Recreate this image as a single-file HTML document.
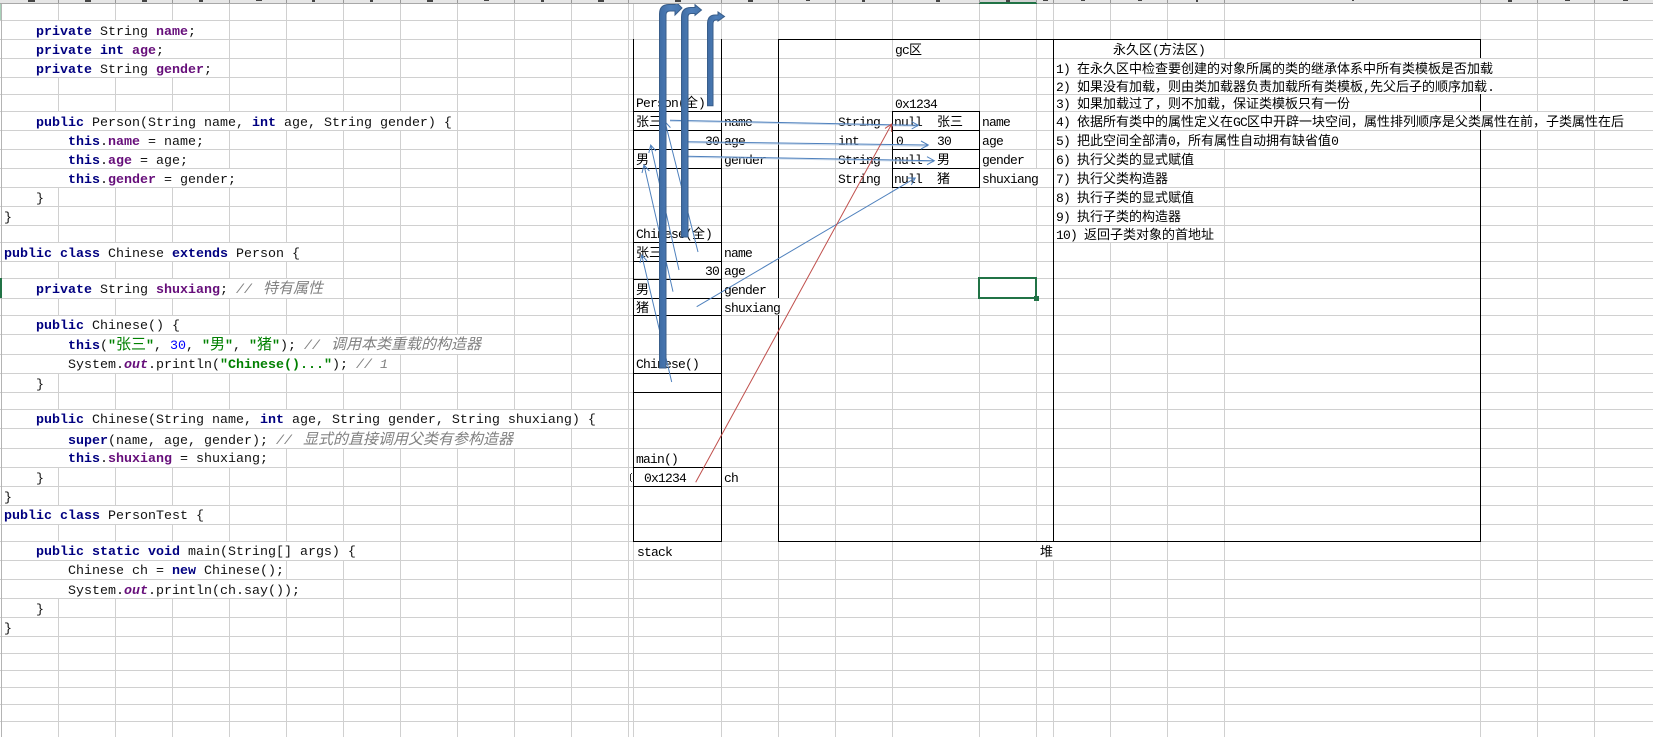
<!DOCTYPE html>
<html><head><meta charset="utf-8"><style>
html,body{margin:0;padding:0;background:#fff}
#p{position:relative;width:1653px;height:737px;overflow:hidden;background:#fff}
svg{position:absolute;left:0;top:0}
.l{position:absolute;white-space:pre;font:13.33px/18px "Liberation Mono",monospace;color:#111;height:18px}
.k{font-weight:bold;color:#000080}
.f{font-weight:bold;color:#660e7a}
.o{font-weight:bold;font-style:italic;color:#660e7a}
.s{font-weight:bold;color:#008000}
.sc{color:#008000;font:15px/0 "Noto Sans CJK SC",sans-serif}
.n{color:#0000ff}
.m{font-style:italic;color:#808080}
.mc{font:italic 15px/0 "Noto Sans CJK SC",sans-serif;color:#808080;margin-left:3px}
.d{position:absolute;white-space:pre;font:13px/18px "Liberation Mono",monospace;letter-spacing:-.8px;color:#000;height:18px}
.d b{font:13px/0 "WenQuanYi Zen Hei","Noto Sans CJK SC",sans-serif;letter-spacing:0}
</style></head><body><div id="p">
<svg width="1653" height="737" shape-rendering="crispEdges">
<path fill="none" stroke="#d0d0d0" stroke-width="1" d="M58.5 3V737M115.5 3V737M172.5 3V737M229.5 3V737M286.5 3V737M343.5 3V737M400.5 3V737M457.5 3V737M514.5 3V737M571.5 3V737M628.5 3V737M633.5 3V737M721.5 3V737M778.5 3V737M835.5 3V737M892.5 3V737M979.5 3V737M1036.5 3V737M1053.5 3V737M1110.5 3V737M1167.5 3V737M1224.5 3V737M1480.5 3V737M1537.5 3V737M1594.5 3V737
M0 20.5H1653M0 39.5H1653M0 58.5H1653M0 77.5H1653M0 94.5H1653M0 111.5H1653M0 130.5H1653M0 149.5H1653M0 168.5H1653M0 187.5H1653M0 206.5H1653M0 225.5H1653M0 242.5H1653M0 261.5H1653M0 278.5H1653M0 298.5H1653M0 315.5H1653M0 334.5H1653M0 354.5H1653M0 373.5H1653M0 392.5H1653M0 409.5H1653M0 428.5H1653M0 448.5H1653M0 467.5H1653M0 486.5H1653M0 505.5H1653M0 524.5H1653M0 541.5H1653M0 560.5H1653M0 579.5H1653M0 598.5H1653M0 617.5H1653M0 636.5H1653M0 653.5H1653M0 670.5H1653M0 687.5H1653M0 704.5H1653M0 721.5H1653"/>
<g fill="#fff">
<rect x="2" y="21" width="171" height="18"/><rect x="2" y="40" width="171" height="18"/><rect x="2" y="59" width="171" height="18"/>
<rect x="2" y="112" width="399" height="18"/><rect x="2" y="131" width="171" height="18"/><rect x="2" y="150" width="171" height="18"/><rect x="2" y="169" width="228" height="18"/>
<rect x="2" y="243" width="285" height="18"/><rect x="2" y="279" width="285" height="19"/><rect x="2" y="316" width="171" height="18"/>
<rect x="2" y="335" width="456" height="19"/><rect x="2" y="355" width="342" height="18"/><rect x="2" y="410" width="570" height="18"/>
<rect x="2" y="429" width="513" height="19"/><rect x="2" y="449" width="228" height="18"/><rect x="2" y="506" width="171" height="18"/>
<rect x="2" y="542" width="342" height="18"/><rect x="2" y="561" width="228" height="18"/><rect x="2" y="580" width="285" height="18"/>
<rect x="1054" y="40" width="114" height="18"/><rect x="1054" y="59" width="427" height="18"/><rect x="1054" y="78" width="427" height="16"/><rect x="1054" y="95" width="171" height="16"/>
<rect x="1054" y="112" width="541" height="18"/><rect x="1054" y="131" width="171" height="18"/><rect x="1054" y="150" width="114" height="18"/><rect x="1054" y="169" width="114" height="18"/><rect x="1054" y="188" width="114" height="18"/><rect x="1054" y="207" width="114" height="18"/><rect x="1054" y="226" width="114" height="16"/>
<rect x="980" y="169" width="57" height="18"/><rect x="722" y="299" width="57" height="16"/><rect x="1030" y="542" width="24" height="18"/>
</g>
<g fill="#000">
<rect x="633" y="39" width="1" height="503"/><rect x="721" y="39" width="1" height="503"/>
<rect x="633" y="111" width="88" height="1"/><rect x="633" y="130" width="88" height="1"/><rect x="633" y="149" width="88" height="1"/><rect x="633" y="168" width="88" height="1"/>
<rect x="633" y="242" width="88" height="1"/><rect x="633" y="261" width="88" height="1"/><rect x="633" y="279" width="88" height="1"/><rect x="633" y="298" width="88" height="1"/><rect x="633" y="315" width="88" height="1"/>
<rect x="633" y="373" width="88" height="1"/><rect x="633" y="392" width="88" height="1"/><rect x="633" y="467" width="88" height="1"/><rect x="633" y="486" width="88" height="1"/><rect x="633" y="541" width="88" height="1"/>
<rect x="778" y="39" width="703" height="1"/><rect x="778" y="541" width="703" height="1"/>
<rect x="778" y="39" width="1" height="259"/><rect x="778" y="315" width="1" height="227"/>
<rect x="1053" y="39" width="1" height="503"/>
<rect x="1480" y="39" width="1" height="19"/><rect x="1480" y="94" width="1" height="17"/><rect x="1480" y="130" width="1" height="412"/>
<rect x="892" y="111" width="88" height="1"/><rect x="892" y="130" width="88" height="1"/><rect x="892" y="149" width="88" height="1"/><rect x="892" y="168" width="88" height="1"/><rect x="892" y="187" width="88" height="1"/>
<rect x="892" y="111" width="1" height="77"/><rect x="979" y="111" width="1" height="77"/>
</g>
<rect x="979" y="278" width="57" height="20" fill="none" stroke="#217346" stroke-width="2"/>
<rect x="1034" y="296" width="5" height="5" fill="#217346"/>
</svg>

<div class="l" style="left:4px;top:24px">    <span class="k">private</span> String <span class="f">name</span>;</div>
<div class="l" style="left:4px;top:43px">    <span class="k">private int</span> <span class="f">age</span>;</div>
<div class="l" style="left:4px;top:62px">    <span class="k">private</span> String <span class="f">gender</span>;</div>
<div class="l" style="left:4px;top:115px">    <span class="k">public</span> Person(String name, <span class="k">int</span> age, String gender) {</div>
<div class="l" style="left:4px;top:134px">        <span class="k">this</span>.<span class="f">name</span> = name;</div>
<div class="l" style="left:4px;top:153px">        <span class="k">this</span>.<span class="f">age</span> = age;</div>
<div class="l" style="left:4px;top:172px">        <span class="k">this</span>.<span class="f">gender</span> = gender;</div>
<div class="l" style="left:4px;top:191px">    }</div>
<div class="l" style="left:4px;top:210px">}</div>
<div class="l" style="left:4px;top:246px"><span class="k">public class</span> Chinese <span class="k">extends</span> Person {</div>
<div class="l" style="left:4px;top:282px">    <span class="k">private</span> String <span class="f">shuxiang</span>; <span class="m">// </span><span class="mc">特有属性</span></div>
<div class="l" style="left:4px;top:318px">    <span class="k">public</span> Chinese() {</div>
<div class="l" style="left:4px;top:338px">        <span class="k">this</span>(<span class="s">"</span><span class="sc">张三</span><span class="s">"</span>, <span class="n">30</span>, <span class="s">"</span><span class="sc">男</span><span class="s">"</span>, <span class="s">"</span><span class="sc">猪</span><span class="s">"</span>); <span class="m">// </span><span class="mc">调用本类重载的构造器</span></div>
<div class="l" style="left:4px;top:357px">        System.<span class="o">out</span>.println(<span class="s">"Chinese()..."</span>); <span class="m">// 1</span></div>
<div class="l" style="left:4px;top:377px">    }</div>
<div class="l" style="left:4px;top:412px">    <span class="k">public</span> Chinese(String name, <span class="k">int</span> age, String gender, String shuxiang) {</div>
<div class="l" style="left:4px;top:433px">        <span class="k">super</span>(name, age, gender); <span class="m">// </span><span class="mc">显式的直接调用父类有参构造器</span></div>
<div class="l" style="left:4px;top:451px">        <span class="k">this</span>.<span class="f">shuxiang</span> = shuxiang;</div>
<div class="l" style="left:4px;top:471px">    }</div>
<div class="l" style="left:4px;top:490px">}</div>
<div class="l" style="left:4px;top:508px"><span class="k">public class</span> PersonTest {</div>
<div class="l" style="left:4px;top:544px">    <span class="k">public static void</span> main(String[] args) {</div>
<div class="l" style="left:4px;top:563px">        Chinese ch = <span class="k">new</span> Chinese();</div>
<div class="l" style="left:4px;top:583px">        System.<span class="o">out</span>.println(ch.say());</div>
<div class="l" style="left:4px;top:602px">    }</div>
<div class="l" style="left:4px;top:621px">}</div>

<div class="d" style="left:636px;top:95px">Person(<b>全</b>)</div>
<div class="d" style="left:636px;top:114px"><b>张三</b></div>
<div class="d" style="left:705px;top:133px">30</div>
<div class="d" style="left:636px;top:152px"><b>男</b></div>
<div class="d" style="left:636px;top:226px">Chinese(<b>全</b>)</div>
<div class="d" style="left:636px;top:245px"><b>张三</b></div>
<div class="d" style="left:705px;top:263px">30</div>
<div class="d" style="left:636px;top:282px"><b>男</b></div>
<div class="d" style="left:636px;top:300px"><b>猪</b></div>
<div class="d" style="left:636px;top:356px">Chinese()</div>
<div class="d" style="left:636px;top:451px">main()</div>
<div class="d" style="left:644px;top:470px">0x1234</div>
<div class="d" style="left:637px;top:544px">stack</div>
<div class="d" style="left:1040px;top:544px"><b>堆</b></div>
<div class="d" style="left:724px;top:114px">name</div>
<div class="d" style="left:724px;top:133px">age</div>
<div class="d" style="left:724px;top:152px">gender</div>
<div class="d" style="left:724px;top:245px">name</div>
<div class="d" style="left:724px;top:263px">age</div>
<div class="d" style="left:724px;top:282px">gender</div>
<div class="d" style="left:724px;top:300px">shuxiang</div>
<div class="d" style="left:724px;top:470px">ch</div>
<div class="d" style="left:895px;top:42px">gc<b>区</b></div>
<div class="d" style="left:895px;top:96px">0x1234</div>
<div class="d" style="left:838px;top:114px">String</div>
<div class="d" style="left:838px;top:133px">int</div>
<div class="d" style="left:838px;top:152px">String</div>
<div class="d" style="left:838px;top:171px">String</div>
<div class="d" style="left:894px;top:114px">null</div>
<div class="d" style="left:896px;top:133px">0</div>
<div class="d" style="left:894px;top:152px">null</div>
<div class="d" style="left:894px;top:171px">null</div>
<div class="d" style="left:937px;top:114px"><b>张三</b></div>
<div class="d" style="left:937px;top:133px">30</div>
<div class="d" style="left:937px;top:152px"><b>男</b></div>
<div class="d" style="left:937px;top:171px"><b>猪</b></div>
<div class="d" style="left:982px;top:114px">name</div>
<div class="d" style="left:982px;top:133px">age</div>
<div class="d" style="left:982px;top:152px">gender</div>
<div class="d" style="left:982px;top:171px">shuxiang</div>
<div class="d" style="left:1113px;top:42px"><b>永久区</b>(<b>方法区</b>)</div>
<div class="d" style="left:1056px;top:61px">1) <b>在永久区中检查要创建的对象所属的类的继承体系中所有类模板是否加载</b></div>
<div class="d" style="left:1056px;top:79px">2) <b>如果没有加载，则由类加载器负责加载所有类模板</b>,<b>先父后子的顺序加载</b>.</div>
<div class="d" style="left:1056px;top:96px">3) <b>如果加载过了，则不加载，保证类模板只有一份</b></div>
<div class="d" style="left:1056px;top:114px">4) <b>依据所有类中的属性定义在</b>GC<b>区中开辟一块空间，属性排列顺序是父类属性在前，子类属性在后</b></div>
<div class="d" style="left:1056px;top:133px">5) <b>把此空间全部清</b>0<b>，所有属性自动拥有缺省值</b>0</div>
<div class="d" style="left:1056px;top:152px">6) <b>执行父类的显式赋值</b></div>
<div class="d" style="left:1056px;top:171px">7) <b>执行父类构造器</b></div>
<div class="d" style="left:1056px;top:190px">8) <b>执行子类的显式赋值</b></div>
<div class="d" style="left:1056px;top:209px">9) <b>执行子类的构造器</b></div>
<div class="d" style="left:1056px;top:227px">10) <b>返回子类对象的首地址</b></div>

<svg width="1653" height="737">
<defs>
<linearGradient id="g" x1="0" y1="0" x2="1" y2="0"><stop offset="0" stop-color="#3f6ca4"/><stop offset=".5" stop-color="#4f7fb9"/><stop offset="1" stop-color="#4373ac"/></linearGradient>
</defs>
<g fill="none" stroke="#b9cde5" stroke-width="1" opacity=".8">
<path d="M670 121.3L918 126.3M686.7 142.7L928 146.3M686.7 157.3L934 161.7"/>
</g>
<g fill="none" stroke="#4f81bd" stroke-width="1">
<path d="M670 120.3L918 125.3M911.7 121.7L918.3 125.3L911.7 129"/>
<path d="M686.7 141.7L928 145M921 141L928.3 145L921 149"/>
<path d="M686.7 156.3L934 160.7M927 156.7L934.3 160.7L927 164.7"/>
<path d="M696.7 306.7L915.3 178M907.3 178L915.3 178L911.3 185"/>
<path d="M698 252L665 121.7M663 129.5L665 121.7L670.4 127.6"/>
<path d="M679 270L650.7 145M648.8 153L650.7 145L656 151"/>
<path d="M673 291.7L644 165M642 173L644 165L649.4 171"/>
<path d="M671.7 382L641.7 255M640 263L641.7 255L647 261"/>
</g>
<path fill="none" stroke="#c0504d" stroke-width="1" d="M695.7 482.3L891.7 124M885 128.4L891.7 124L891.6 132"/>
<g fill="url(#g)" stroke="#385d8a" stroke-width="1">
<path d="M659.5 368V14Q659.5 4.5 669 4.5H675V1L682 8L675 15V11H670Q666 11 666 15V368Z"/>
<path d="M681.5 237V17Q681.5 7.5 691 7.5H695V4.7L701.5 10L695 15.3V13.5H691Q688 13.5 688 17V237Z"/>
<path d="M707.5 105.7V24Q707.5 15 715 15H718V12L724.5 16.5L718 21V20H716Q713 20 713 24V105.7Z"/>
</g>
</svg>

<svg width="1653" height="737" shape-rendering="crispEdges">
<rect x="0" y="0" width="1653" height="3" fill="#e6e6e6"/>
<rect x="0" y="3" width="1653" height="1" fill="#a8a8a8"/>
<rect x="979" y="0" width="57" height="3" fill="#d2d2d2"/>
<rect x="979" y="2" width="58" height="2" fill="#217346"/>
<rect x="1" y="4" width="1" height="733" fill="#b4b4b4"/>
<rect x="0" y="4" width="1" height="16" fill="#a8d0b8"/>
<rect x="0" y="278" width="2" height="20" fill="#217346"/>
<path fill="#444" d="M28 0h7v2h-7zM85 0h6v2h-6zM142 0h5v2h-5zM199 0h4v2h-4zM256 0h6v1h-6zM312 0h3v2h-3zM370 0h3v2h-3zM427 0h6v2h-6zM484 0h5v1h-5zM541 0h3v2h-3zM598 0h6v2h-6zM675 0h6v2h-6zM748 0h5v2h-5zM806 0h4v1h-4zM862 0h3v2h-3zM936 0h4v2h-4zM1006 0h4v2h-4zM1043 0h5v1h-5zM1081 0h4v1h-4zM1138 0h4v1h-4zM1196 0h2v2h-2zM1352 0h2v1h-2zM1508 0h4v2h-4zM1565 0h5v1h-5zM1623 0h5v1h-5z"/>
<path fill="#9a9a9a" d="M58 0h1v3h-1zM115 0h1v3h-1zM172 0h1v3h-1zM229 0h1v3h-1zM286 0h1v3h-1zM343 0h1v3h-1zM400 0h1v3h-1zM457 0h1v3h-1zM514 0h1v3h-1zM571 0h1v3h-1zM628 0h1v3h-1zM721 0h1v3h-1zM778 0h1v3h-1zM835 0h1v3h-1zM892 0h1v3h-1zM979 0h1v3h-1zM1036 0h1v3h-1zM1053 0h1v3h-1zM1110 0h1v3h-1zM1167 0h1v3h-1zM1224 0h1v3h-1zM1480 0h1v3h-1zM1537 0h1v3h-1zM1594 0h1v3h-1z"/>
<path fill="#333" d="M631 473h1v1h-1zM630 474h1v7h-1zM631 481h1v1h-1z"/>
</svg>
</div></body></html>
